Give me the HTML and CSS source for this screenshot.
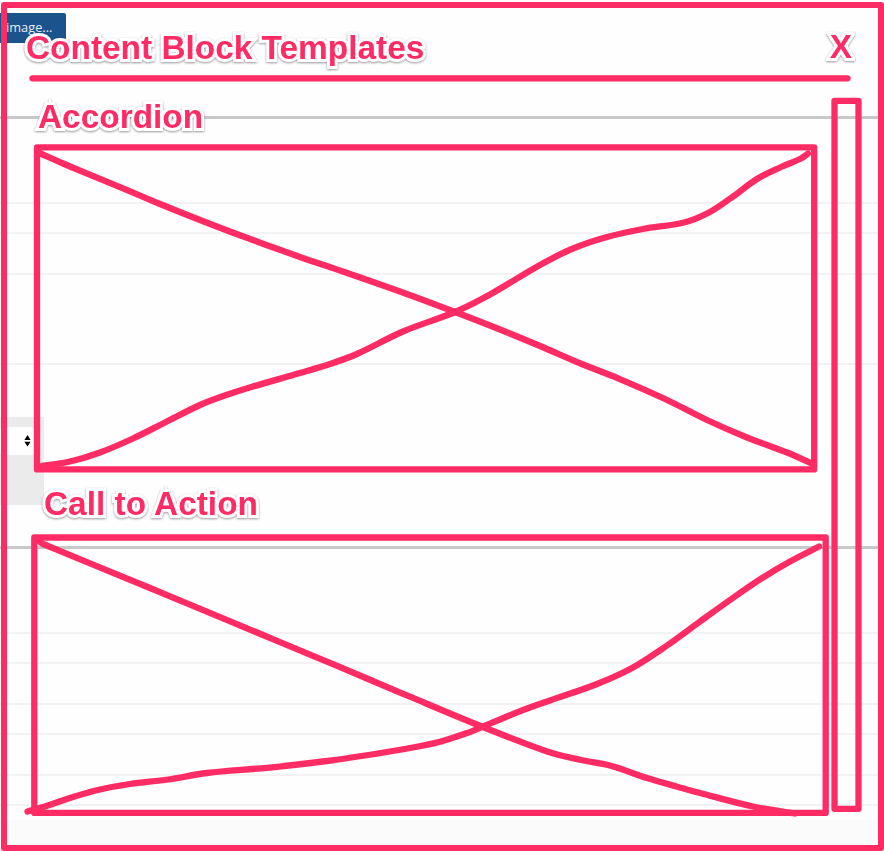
FILE: index.html
```
<!DOCTYPE html>
<html lang="en">
<head>
<meta charset="utf-8">
<title>Content Block Templates</title>
<link rel="stylesheet" href="styles.css">
</head>
<body>
<div class="stage">
  <div class="page">
    <div class="toolbar"><span class="upload">image...</span></div>
    <section class="group group-first">
      <div class="row r85"></div>
      <div class="row r30"></div>
      <div class="row r41"></div>
      <div class="row r90"></div>
      <div class="field">
        <div class="select">
          <svg width="7" height="12" viewBox="0 0 7 12"><path d="M3.5 0 6.6 5H.4ZM3.5 11.5.4 6.8h6.2Z"/></svg>
        </div>
      </div>
    </section>
    <section class="group">
      <div class="row r85"></div>
      <div class="row r30"></div>
      <div class="row r41"></div>
      <div class="row r30"></div>
      <div class="row r41"></div>
      <div class="row r30"></div>
    </section>
    <div class="footer"></div>
  </div>

  <div class="modal">
    <header class="head">
      <h1 class="label">Content Block Templates</h1>
      <span class="label close">X</span>
    </header>
    <svg class="rule" width="824" height="8" viewBox="28 74 824 8"><path class="ink" d="M32.5 78.3H847.5"/></svg>
    <div class="body">
      <div class="list">
        <h2 class="label accordion">Accordion</h2>
        <svg class="wire wire-one" width="784" height="329" viewBox="34 144 784 329">
          <rect class="ink" x="37" y="147.4" width="777.2" height="322"/>
          <path class="ink" data-points="38,152.5 63,163.5 120,187.2 160,204 200,220 240,235.3 300,257 340,270.5 400,291.5 455,312 500,329.5 540,346 583,364.5 618,378.3 665,399 707,420 747,437.5 787,452.5 813,464"/>
          <path class="ink" data-points="42,465.8 70,461.5 100,452.5 133,438.5 165,422.5 200,405 227,394.8 253,386.5 300,373 330,364 357,354 403,331.5 455,312 490,294.5 540,265 573,248.5 607,237 643,229 684,222.5 709,212.5 731,198 757,179 781,167 801,158.5 808,153.5"/>
        </svg>
        <h2 class="label cta">Call to Action</h2>
        <svg class="wire wire-two" width="800" height="284" viewBox="30 534 800 284">
          <rect class="ink" x="34.3" y="537.5" width="791.4" height="275.4"/>
          <path class="ink" data-points="40,542 43,544 150,588 257,632.5 333,664.2 410,696.7 483,727 547,751.5 580,759.7 610,765.5 647,778 677,786.7 700,793 753,806.5 795,813.5"/>
          <path class="ink" data-points="27.5,811.5 43,807 73,797 100,789.5 130,784 168,779.5 207,773 267,767.8 323,761.5 365,755.5 410,748 440,741.7 467,733 483,726.5 523,710 550,700.5 597,684 633,667.5 667,645.5 700,621.5 730,600 763,577.5 790,561.5 819,546.5"/>
        </svg>
      </div>
      <svg class="scroll" width="32" height="716" viewBox="831 97 32 716"><rect class="ink" x="834.5" y="100.8" width="24" height="708"/></svg>
    </div>
  </div>
</div>
<script src="strokes.js"></script>
</body>
</html>
```
FILE: styles.css
```
* { box-sizing: border-box; }
body { margin: 0; background: #fefefe; }
svg { display: block; overflow: visible; flex: none; }

.stage { display: grid; width: 884px; height: 851px; overflow: hidden; }
.page, .modal { grid-area: 1 / 1; min-width: 0; }

/* Form page behind the modal */
.page { font-family: "Open Sans", sans-serif; }
.toolbar { height: 116px; padding-top: 13px; }
.upload {
  display: block; width: 66px; height: 30px; padding-left: 6px;
  border-radius: 0 2px 2px 0; background: #1b538d; color: #e9eef4;
  font-size: 12.8px; line-height: 29px;
}
.group { height: 274px; border-top: 3px solid #c8c8c8; }
.group-first { height: 430px; }
.row { border-bottom: 2px solid #f2f2f3; }
.r85 { height: 85px; }
.r30 { height: 30px; }
.r41 { height: 41px; }
.r90 { height: 90px; }
.field { width: 44px; height: 88px; margin-top: 52px; padding-top: 10px; background: #ebebeb; }
.select {
  display: flex; align-items: center; justify-content: flex-end;
  width: 34px; height: 28px; padding-right: 3px; border-radius: 3px; background: #fefefe;
}
.footer { height: 31px; background: #fbfbfb; }

/* Hand-drawn modal */
.modal {
  margin: 2px 0 0 1px;
  border: 6px solid #ff2b64; border-radius: 3px;
  font-family: "Liberation Sans", Arial, sans-serif;
}
.ink {
  fill: none; stroke: #ff2b64; stroke-width: 6.3;
  stroke-linecap: round; stroke-linejoin: round;
}
.label {
  margin: 0; color: #ff2b64;
  font-size: 33.4px; font-weight: bold; line-height: 40px; white-space: nowrap;
  -webkit-text-stroke: 6px #fff; paint-order: stroke fill;
  filter: drop-shadow(0 1px 1px rgba(0, 0, 0, .4));
}
.head {
  display: flex; justify-content: space-between;
  height: 66px; padding: 20px 26px 0 19px;
}
.close { margin-top: -1px; }
.rule { margin-left: 21px; }
.body { display: flex; justify-content: space-between; padding: 0 15px 0 23px; }
.list { width: 800px; }
.accordion { margin: 15px 0 0 8px; }
.wire-one { margin: 7px 0 0 4px; }
.cta { margin: 11px 0 0 14px; }
.wire-two { margin-top: 10px; }
.scroll { margin: 15px 0 0 0; }
```
FILE: strokes.js
```
// Turns each list of pen samples into a smooth curve through them.
document.querySelectorAll("[data-points]").forEach(function (path) {
  var p = path.dataset.points.split(" ").map(function (s) { return s.split(",").map(Number); });
  var d = "M" + p[0];
  for (var i = 0; i < p.length - 1; i++) {
    var a = p[i], b = p[i + 1], before = p[i - 1] || a, after = p[i + 2] || b;
    var len = Math.hypot(b[0] - a[0], b[1] - a[1]);
    var ka = len / 3 / Math.hypot(b[0] - before[0], b[1] - before[1]);
    var kb = len / 3 / Math.hypot(after[0] - a[0], after[1] - a[1]);
    d += "C" + [a[0] + (b[0] - before[0]) * ka, a[1] + (b[1] - before[1]) * ka,
      b[0] - (after[0] - a[0]) * kb, b[1] - (after[1] - a[1]) * kb, b[0], b[1]].join(" ");
  }
  path.setAttribute("d", d);
});
```
